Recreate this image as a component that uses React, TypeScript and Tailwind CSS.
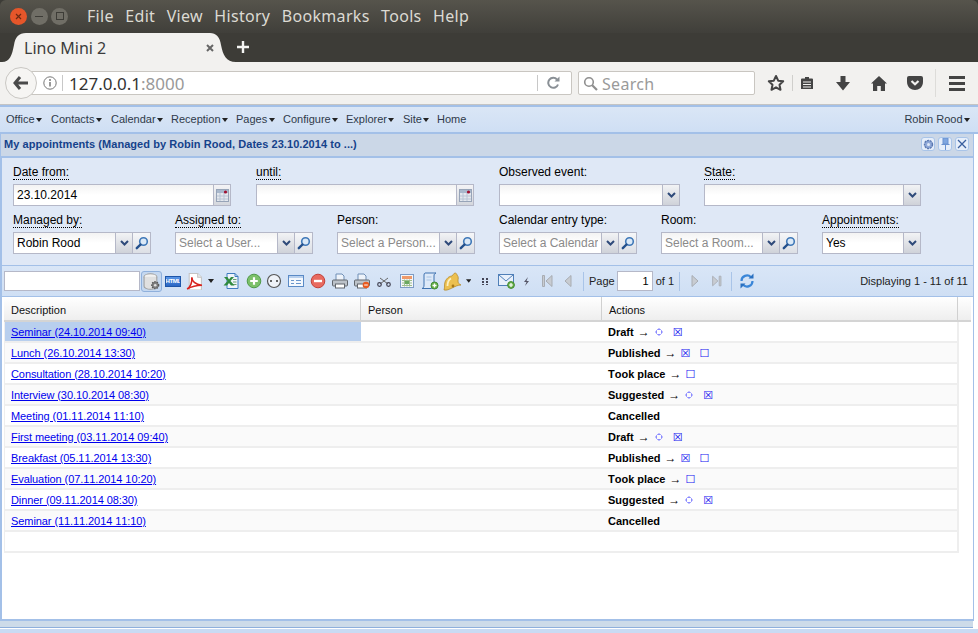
import React from "react";

const Caret = ({ c = "#222" }: { c?: string }) => (
  <svg width="6" height="4" viewBox="0 0 6 4" className="ml-[1.5px]"><path d="M0 0h6L3 4z" fill={c} /></svg>
);

const MenuItem = ({ t, w, caret = true }: { t: string; w: number; caret?: boolean }) => (
  <div className="flex items-center text-[#2f3a4a]" style={{ width: w }}>
    <span>{t}</span>
    {caret && <Caret />}
  </div>
);

const CalBtn = () => (
  <div className="w-[17px] h-full shrink-0 flex items-center justify-center bg-gradient-to-b from-[#f4f4f6] to-[#d4d7dd] border-l border-[#b5b8c8]">
    <svg width="13" height="13" viewBox="0 0 13 13">
      <rect x="0.5" y="0.5" width="12" height="12" fill="#e4e8ee" stroke="#97a4b8" />
      <rect x="1" y="1" width="11" height="3" fill="#a9b8cc" />
      <path d="M4 4v8M8 4v8M1 7h11M1 10h11" stroke="#b8c4d4" />
      <circle cx="9.5" cy="3" r="1.6" fill="#a01030" />
    </svg>
  </div>
);

const DropBtn = () => (
  <div className="w-[17px] h-full shrink-0 flex items-center justify-center bg-gradient-to-b from-[#f2f3f5] to-[#cfd2d9] border-l border-[#b5b8c8]">
    <svg width="9" height="6" viewBox="0 0 9 6"><path d="M1 1l3.5 3.5L8 1" fill="none" stroke="#2f4a7a" strokeWidth="2" /></svg>
  </div>
);

const SearchBtn = () => (
  <div className="w-[18px] h-full shrink-0 flex items-center justify-center bg-gradient-to-b from-[#f6f7f9] to-[#dcdfe5] border-l border-[#b5b8c8]">
    <svg width="14" height="14" viewBox="0 0 14 14">
      <circle cx="8.5" cy="5.5" r="3.8" fill="#dbe9f7" stroke="#3f78b8" strokeWidth="1.6" />
      <path d="M5.5 8.5L1.8 12.2" stroke="#24508c" strokeWidth="2.4" strokeLinecap="round" />
    </svg>
  </div>
);

const Field = ({
  label, w, value, placeholder, dotted, btn, search, mr, clip,
}: {
  label: string; w: number; value?: string; placeholder?: string; dotted?: boolean;
  btn: "cal" | "drop"; search?: boolean; mr: number; clip?: boolean;
}) => (
  <div className="shrink-0" style={{ width: w, marginRight: mr }}>
    <div className="h-[19px] leading-[15px] text-[12px] text-black">
      <span className={dotted ? "border-b border-dotted border-black inline-block h-[15px]" : ""}>{label}</span>
    </div>
    <div className="h-[22px] flex border border-[#b5b8c8] bg-gradient-to-b from-[#f3f3f3] via-white to-white overflow-hidden">
      <div className={`flex-1 min-w-0 pl-[3px] text-[12px] leading-[20px] whitespace-nowrap overflow-hidden ${clip ? "mr-[3px]" : "mr-[2px]"}`}>
        {value ? <span className="text-black">{value}</span> : <span className="text-[#8a8a8a]">{placeholder}</span>}
      </div>
      {btn === "cal" ? <CalBtn /> : <DropBtn />}
      {search && <SearchBtn />}
    </div>
  </div>
);

/* ---- toolbar icons ---- */
const I = ({ w, children }: { w: number; children: React.ReactNode }) => (
  <div className="shrink-0 flex items-center justify-center h-full" style={{ width: w }}>{children}</div>
);
const S = ({ s = 16, children }: { s?: number; children: React.ReactNode }) => (
  <svg width={s} height={s} viewBox="0 0 16 16">{children}</svg>
);
const Sep = () => <div className="w-px h-[19px] bg-[#a9c4e8] shrink-0" />;

const DbGear = () => (
  <div className="w-[21px] h-[21px] shrink-0 rounded-[3px] border border-[#8fb0dc] bg-[#c5d8f0] flex items-center justify-center">
    <S s={17}>
      <ellipse cx="7" cy="3.500" rx="6" ry="2.800" fill="#f2f2f2" stroke="#a0a0a0" />
      <path d="M1 3.500v9c0 1.500 2.700 2.800 6 2.800s6-1.300 6-2.800v-9" fill="#e0e0e0" stroke="#a0a0a0" />
      <circle cx="11.500" cy="11.500" r="3.200" fill="#808080" stroke="#5a5a5a" strokeWidth="1.400" strokeDasharray="1.300 1" />
      <circle cx="11.500" cy="11.500" r="1.200" fill="#e0e0e0" />
    </S>
  </div>
);
const Html = () => (
  <div className="w-[16px] h-[11px] border border-[#1e55a8] bg-gradient-to-b from-[#5a96e6] to-[#2a66c4] flex items-center justify-center overflow-hidden">
    <span className="text-[6px] leading-[9px] font-bold tracking-[-0.4px] text-white">HTML</span>
  </div>
);
const Pdf = () => (
  <S s={17}>
    <path d="M3 0.500h8l3.500 3.500v12H3z" fill="#fff" stroke="#c4c4c4" />
    <path d="M11 0.500V4h3.500" fill="#eee" stroke="#c4c4c4" />
    <path d="M1 15c3-1.500 5-6 4.500-11 0 3.500 3 7 9.500 7.500-5 0-9.500 1-14 3.500z" fill="none" stroke="#d8221e" strokeWidth="1.500" />
  </S>
);
const Excel = () => (
  <S>
    <path d="M4 0.5h8l3 3v12H4z" fill="#eef4fa" stroke="#3f7cc0" />
    <path d="M12 0.500v3h3" fill="none" stroke="#3f7cc0" />
    <path d="M10 6.500h3.500M10 9h3.500M10 11.500h3.500" stroke="#6aa070" />
    <path d="M1 4h3.500L6 6.500 8 4h3L7.500 8l4 4.500H8L6 10l-2 2.500H0.500L4.500 8z" fill="#2f8a3e" />
  </S>
);
const Plus = () => (
  <S>
    <circle cx="8" cy="8" r="6.8" fill="#7cc06a" stroke="#4f9a48" />
    <path d="M8 4.2v7.6M4.2 8h7.6" stroke="#fff" strokeWidth="2.2" />
  </S>
);
const Dots = () => (
  <S>
    <circle cx="8" cy="8" r="6.5" fill="#eef2f8" stroke="#555" strokeWidth="1.2" />
    <circle cx="5" cy="8" r="1" fill="#333" />
    <circle cx="11" cy="8" r="1" fill="#333" />
  </S>
);
const FormI = () => (
  <S>
    <rect x="0.5" y="2.5" width="15" height="11" fill="#f4f8fd" stroke="#5a8ac6" />
    <rect x="1" y="3" width="14" height="2" fill="#b8d0ee" />
    <path d="M3 7.5h3M3 10.5h3M8 7.5h5M8 10.5h5" stroke="#6a96cc" />
  </S>
);
const Minus = () => (
  <S>
    <circle cx="8" cy="8" r="6.8" fill="#e86a60" stroke="#c24038" />
    <path d="M4 8h8" stroke="#fff" strokeWidth="2.4" />
  </S>
);
const Printer = ({ badge }: { badge?: boolean }) => (
  <S>
    <path d="M4 1h6l2 2v5H4z" fill="#eef3fa" stroke="#6f8fb6" />
    <rect x="0.5" y="7" width="15" height="6" rx="1" fill="#bcc2c9" stroke="#62676e" />
    <rect x="3.5" y="11" width="9" height="4" fill="#fff" stroke="#62676e" />
    {badge && <circle cx="12" cy="12" r="3.3" fill="#e85a20" />}
    {badge && <path d="M10.2 12h3.6" stroke="#fff" />}
  </S>
);
const Scissors = () => (
  <S>
    <path d="M4 5l8 6M12 5l-8 6" stroke="#666" strokeWidth="1" />
    <circle cx="3.5" cy="11.5" r="1.8" fill="none" stroke="#445" strokeWidth="1.2" />
    <circle cx="12.5" cy="11.5" r="1.8" fill="none" stroke="#445" strokeWidth="1.2" />
  </S>
);
const Cal = () => (
  <S>
    <rect x="1.5" y="1.5" width="13" height="13" fill="#f4f6fa" stroke="#7d9cc4" />
    <rect x="3" y="3" width="10" height="3" fill="#ee9a6a" />
    <path d="M3 7.500h10M3 10h10M3 12.500h10M5.500 6.500v7M8 6.500v7M10.500 6.500v7" stroke="#9dbf8c" />
    <rect x="6" y="8" width="4" height="3" fill="#6aa860" />
  </S>
);
const Script = () => (
  <svg width="19" height="18" viewBox="0 0 19 18">
    <path d="M5 1h11c-1.500 .5-2 1.500-2 3v9c0 2-1 3.500-2.500 3.500H2C3.500 16 4 15 4 13V3c0-1 .300-1.700 1-2z" fill="#dde9f8" stroke="#3f72b0" />
    <path d="M6.500 5h5M6.500 8h5" stroke="#a8c4e4" />
    <circle cx="14.500" cy="13.500" r="3.500" fill="#6ab04c" stroke="#3f8a30" />
    <path d="M12.500 13.500h4M14.500 11.500v4" stroke="#fff" strokeWidth="1.300" />
  </svg>
);
const Bell = () => (
  <svg width="20" height="19" viewBox="0 0 20 19">
    <path d="M13 1c1 0 2 1 2 2 2 2 1 4 1 6s1 3 3 4c-3 0-6 1.500-9 3s-5 2.500-8 2c1-3 0-5 1-8s4-6 7-6c1-1 2-3 3-3z" fill="#ecc050" stroke="#b08420" strokeWidth="0.700" />
    <path d="M9 6.500C7 7.500 5.500 10 5.500 14" stroke="#fcf0c0" strokeWidth="1.800" fill="none" />
    <circle cx="11" cy="14" r="1.400" fill="#a87818" />
  </svg>
);
const GridI = () => (
  <svg width="7" height="7" viewBox="0 0 7 7"><path d="M0 0h2v2H0zM4 0h2v2H4zM0 3h2v2H0zM4 3h2v2H4zM0 6h2v1H0zM4 6h2v1H4z" fill="#445" /></svg>
);
const Mail = () => (
  <svg width="17" height="16" viewBox="0 0 17 16">
    <rect x="0.500" y="1.500" width="15" height="11" fill="#e8f0fb" stroke="#4f7fb8" />
    <path d="M1 2l7 6 7-6" fill="none" stroke="#4f7fb8" />
    <circle cx="13" cy="12" r="3.400" fill="#6ab04c" stroke="#3f8a30" />
    <path d="M11 12h4M13 10v4" stroke="#fff" strokeWidth="1.200" />
  </svg>
);
const Bolt = () => (
  <svg width="7" height="9" viewBox="0 0 7 9"><path d="M5 0L1 5h2.500L2 9l4-5H3.500z" fill="#556" /></svg>
);
const Nav = ({ d }: { d: "first" | "prev" | "next" | "last" }) => (
  <S>
    {d === "first" && <path d="M3.500 2.500h2v11h-2zM13 2.500v11L7 8z" fill="#c8ccd2" stroke="#a8acb2" />}
    {d === "prev" && <path d="M11 2.500v11L5 8z" fill="#c8ccd2" stroke="#a8acb2" />}
    {d === "next" && <path d="M5 2.500v11L11 8z" fill="#c8ccd2" stroke="#a8acb2" />}
    {d === "last" && <path d="M12.500 2.500h-2v11h2zM3 2.500v11L9 8z" fill="#c8ccd2" stroke="#a8acb2" />}
  </S>
);
const Refresh = () => (
  <S>
    <path d="M2.500 8A5.500 5.500 0 0 1 12 4.200" fill="none" stroke="#3a86d8" strokeWidth="2.200" />
    <path d="M13.500 8A5.500 5.500 0 0 1 4 11.800" fill="none" stroke="#3a86d8" strokeWidth="2.200" />
    <path d="M9.500 5.500h5v-5zM6.500 10.500h-5v5z" fill="#2a70c0" />
  </S>
);
const Sun = () => (
  <svg width="8" height="8" viewBox="0 0 8 8" className="ml-[5px] mr-[1px]">
    <path d="M2.500 1.500h3l1 1v3l-1 1h-3l-1-1v-3z" fill="none" stroke="#8a8aff" />
    <path d="M4 0v1M4 7v1M0 4h1M7 4h1" stroke="#8a8aff" />
  </svg>
);

/* ---- grid ---- */
type Row = { t: string; a: string; g: string[] };
const rows: Row[] = [
  { t: "Seminar (24.10.2014 09:40)", a: "Draft", g: ["☼", "☒"] },
  { t: "Lunch (26.10.2014 13:30)", a: "Published", g: ["☒", "☐"] },
  { t: "Consultation (28.10.2014 10:20)", a: "Took place", g: ["☐"] },
  { t: "Interview (30.10.2014 08:30)", a: "Suggested", g: ["☼", "☒"] },
  { t: "Meeting (01.11.2014 11:10)", a: "Cancelled", g: [] },
  { t: "First meeting (03.11.2014 09:40)", a: "Draft", g: ["☼", "☒"] },
  { t: "Breakfast (05.11.2014 13:30)", a: "Published", g: ["☒", "☐"] },
  { t: "Evaluation (07.11.2014 10:20)", a: "Took place", g: ["☐"] },
  { t: "Dinner (09.11.2014 08:30)", a: "Suggested", g: ["☼", "☒"] },
  { t: "Seminar (11.11.2014 11:10)", a: "Cancelled", g: [] },
];

const Head = ({ t, w }: { t: string; w: number }) => (
  <div className="h-full border-r border-[#d0d0d0] pl-[7px] leading-[26px] text-[11px] text-[#111]" style={{ width: w }}>{t}</div>
);

export default function App() {
  return (
    <div className="w-[978px] h-[633px] overflow-hidden flex flex-col bg-white font-['Liberation_Sans',sans-serif]">
      {/* window title + menu */}
      <div className="h-[33px] shrink-0 bg-[#3d3c37]">
        <div className="h-full pb-[1px] rounded-t-[6px] bg-gradient-to-b from-[#56544c] to-[#403f3a] flex items-center font-['Noto_Sans',sans-serif]">
          <div className="w-[87px] flex items-center pl-[10px] gap-[3.5px]">
            <div className="w-[17px] h-[17px] rounded-full bg-[#e5562a] flex items-center justify-center">
              <svg width="7" height="7" viewBox="0 0 7 7"><path d="M1 1l5 5M6 1l-5 5" stroke="#6d2a12" strokeWidth="1.200" /></svg>
            </div>
            <div className="w-[17px] h-[17px] rounded-full bg-[#706e66] flex items-center justify-center"><div className="w-[8px] h-px bg-[#3d3c37]" /></div>
            <div className="w-[17px] h-[17px] rounded-full bg-[#706e66] flex items-center justify-center"><div className="w-[8px] h-[8px] border border-[#3d3c37]" /></div>
          </div>
          <div className="flex gap-[11.5px] text-[16px] tracking-[0.3px] text-[#dcdad3]">
            {["File", "Edit", "View", "History", "Bookmarks", "Tools", "Help"].map((m) => <span key={m}>{m}</span>)}
          </div>
        </div>
      </div>

      {/* tab strip */}
      <div className="h-[29px] shrink-0 bg-[#3d3c37] flex items-end pl-[2px] font-['Noto_Sans',sans-serif]">
        <div className="relative w-[234px] h-[29px] flex items-center pl-[22px]">
          <svg className="absolute inset-0" width="234" height="29" viewBox="0 0 234 29">
            <path d="M0 29C8 29 10 22 12 12 13 4 17 0 24 0H208C214 0 218 4 219 12 221 22 224 29 234 29z" fill="#f2f1ef" />
          </svg>
          <span className="relative text-[16px] text-[#3c3c3c]">Lino Mini 2</span>
          <svg className="absolute left-[204px] top-[11px]" width="8" height="8" viewBox="0 0 8 8"><path d="M1 1l6 6M7 1l-6 6" stroke="#666" strokeWidth="2" /></svg>
        </div>
        <svg className="mb-[8px]" width="14" height="14" viewBox="0 0 14 14"><path d="M7 1v12M1 7h12" stroke="#f4f4f2" strokeWidth="2.400" /></svg>
      </div>

      {/* nav bar */}
      <div className="h-[43px] shrink-0 bg-[#f2f1ef] border-b border-[#c4c4c4] flex items-center relative font-['Noto_Sans',sans-serif]">
        <div className="absolute left-[5px] top-[5px] w-[32px] h-[32px] rounded-full border border-[#c9c7c3] bg-[#f6f5f3] flex items-center justify-center z-10">
          <svg width="16" height="14" viewBox="0 0 16 14"><path d="M7 1L2 7l5 6M2 7h13" fill="none" stroke="#4a4a4a" strokeWidth="3" /></svg>
        </div>
        <div className="ml-[30px] w-[542px] h-[24px] rounded-[2px] border border-[#c9c6c1] bg-white flex items-center">
          <svg className="ml-[12px]" width="14" height="14" viewBox="0 0 14 14">
            <circle cx="7" cy="7" r="6.200" fill="none" stroke="#777" strokeWidth="1" />
            <path d="M7 6v4.500" stroke="#777" strokeWidth="1.500" /><circle cx="7" cy="4" r="1" fill="#777" />
          </svg>
          <div className="ml-[5px] w-px h-[16px] bg-[#c8c8c8]" />
          <span className="ml-[6px] pt-[1px] text-[17px] text-[#333]">127.0.0.1<span className="text-[#999]">:8000</span></span>
          <div className="ml-auto w-px h-[16px] bg-[#c8c8c8]" />
          <svg className="ml-[9px] mr-[10px]" width="14" height="14" viewBox="0 0 14 14">
            <path d="M11 8.500A5 5 0 1 1 10 3.500" fill="none" stroke="#8a9096" strokeWidth="2" />
            <path d="M7.500 5.500h5v-5z" fill="#8a9096" />
          </svg>
        </div>
        <div className="ml-[6px] w-[177px] h-[24px] rounded-[2px] border border-[#c9c6c1] bg-white flex items-center">
          <svg className="ml-[4px]" width="15" height="15" viewBox="0 0 15 15">
            <circle cx="6" cy="6" r="4.300" fill="none" stroke="#8f8f8f" strokeWidth="1.600" />
            <path d="M9.200 9.200L14 14" stroke="#8f8f8f" strokeWidth="2.200" />
          </svg>
          <span className="ml-[4px] pt-[1px] text-[16px] tracking-[0.3px] text-[#9a9a9a]">Search</span>
        </div>
        <svg className="ml-[12px]" width="18" height="18" viewBox="0 0 18 18"><path d="M9 2l2.200 4.700 5 .6-3.700 3.500 1 5L9 13.300 4.500 15.800l1-5L1.800 7.300l5-.6z" fill="none" stroke="#444" strokeWidth="2" strokeLinejoin="round" /></svg>
        <div className="ml-[7px] w-px h-[16px] bg-[#d0cfcc]" />
        <svg className="ml-[7px]" width="14" height="14" viewBox="0 0 14 14"><path d="M1 3.500a1 1 0 0 1 1-1h3V1h4v1.500h3a1 1 0 0 1 1 1V13H1z" fill="#444" /><path d="M3 6h8M3 8.500h8M3 11h8" stroke="#f2f1ef" /></svg>
        <svg className="ml-[22px]" width="14" height="15" viewBox="0 0 14 15"><path d="M4.500 0h5v6H14l-7 8.500L0 6h4.500z" fill="#444" /></svg>
        <svg className="ml-[21px]" width="16" height="15" viewBox="0 0 16 15"><path d="M8 0l8 7.500h-2V15H9.800v-5H6.200v5H2V7.500H0z" fill="#444" /></svg>
        <svg className="ml-[20px]" width="16" height="14" viewBox="0 0 16 14"><path d="M2 0h12a2 2 0 0 1 2 2v4c0 5-4 8-8 8S0 11 0 6V2a2 2 0 0 1 2-2z" fill="#444" /><path d="M4.500 5L8 8.300 11.500 5" fill="none" stroke="#f2f1ef" strokeWidth="2.200" /></svg>
        <div className="ml-[12px] w-px h-[28px] bg-[#dddcd9]" />
        <div className="ml-[13px] flex flex-col gap-[3px]">
          <div className="w-[16px] h-[3px] bg-[#444]" /><div className="w-[16px] h-[3px] bg-[#444]" /><div className="w-[16px] h-[3px] bg-[#444]" />
        </div>
      </div>

      {/* Lino main menu */}
      <div className="h-[29px] shrink-0 border-y-2 border-[#a3c0e8] bg-gradient-to-b from-[#dae6f6] to-[#cfdff4] flex items-center pl-[6px] pr-[8px] text-[11px]">
        <MenuItem t="Office" w={45} />
        <MenuItem t="Contacts" w={60} />
        <MenuItem t="Calendar" w={60} />
        <MenuItem t="Reception" w={65} />
        <MenuItem t="Pages" w={47} />
        <MenuItem t="Configure" w={63} />
        <MenuItem t="Explorer" w={57} />
        <MenuItem t="Site" w={34} />
        <MenuItem t="Home" w={40} caret={false} />
        <div className="ml-auto flex items-center text-[#2f3a4a]"><span>Robin Rood</span><Caret /></div>
      </div>

      {/* window panel */}
      <div className="flex-1 min-h-0 flex flex-col w-[974px] border-r border-[#a3c0e8]">
        <div className="h-[24px] shrink-0 pb-[2px] bg-[#cbd7e7] border-b-2 border-[#a3c0e8] border-l border-l-[#a3c0e8] flex items-center pl-[3px] pr-[4px] text-[11px] font-bold tracking-[0.05px] text-[#15428b]">
          <span>My appointments (Managed by Robin Rood, Dates 23.10.2014 to ...)</span>
          <div className="ml-auto flex gap-[3px]">
            {[
              <svg key="g" width="11" height="11" viewBox="0 0 11 11"><circle cx="5.500" cy="5.500" r="4" fill="#8fa8d8" stroke="#5a78b0" strokeWidth="1.400" strokeDasharray="2 0.800" /><circle cx="5.500" cy="5.500" r="1.500" fill="#dfe8f6" /></svg>,
              <svg key="p" width="11" height="12" viewBox="0 0 11 12"><path d="M3 0h5v6H3zM1.500 6.500h8M5.500 7v5" fill="#7fa6e0" stroke="#6a92d0" /></svg>,
              <svg key="x" width="10" height="10" viewBox="0 0 10 10"><path d="M1 1l8 8M9 1l-8 8" stroke="#3a5f9e" strokeWidth="1.300" /></svg>,
            ].map((ic, i) => (
              <div key={i} className="w-[14px] h-[14px] rounded-[3px] border border-[#a9c4e8] bg-[#e6eefa] flex items-center justify-center">{ic}</div>
            ))}
          </div>
        </div>

        {/* filter form */}
        <div className="h-[108px] shrink-0 bg-[#dfe8f6] border-l-2 border-[#a3c0e8] border-b border-b-[#a3c0e8] pl-[11px] pt-[7px]">
          <div className="flex h-[48px]">
            <Field label="Date from:" w={218} mr={25} value="23.10.2014" btn="cal" dotted />
            <Field label="until:" w={218} mr={25} btn="cal" dotted />
            <Field label="Observed event:" w={181} mr={24} btn="drop" />
            <Field label="State:" w={217} mr={0} btn="drop" dotted />
          </div>
          <div className="flex">
            <Field label="Managed by:" w={138} mr={24} value="Robin Rood" btn="drop" search dotted />
            <Field label="Assigned to:" w={138} mr={24} placeholder="Select a User..." btn="drop" search dotted />
            <Field label="Person:" w={138} mr={24} placeholder="Select a Person..." btn="drop" search />
            <Field label="Calendar entry type:" w={138} mr={24} placeholder="Select a Calendar" btn="drop" search clip />
            <Field label="Room:" w={137} mr={24} placeholder="Select a Room..." btn="drop" search />
            <Field label="Appointments:" w={99} mr={0} value="Yes" btn="drop" dotted />
          </div>
        </div>

        {/* grid panel */}
        <div className="flex-1 min-h-0 flex flex-col border-l-2 border-[#a3c0e8] border-b-2 border-b-[#a3c0e8] bg-white">
          {/* toolbar */}
          <div className="h-[31px] shrink-0 border-b border-[#a3c0e8] bg-gradient-to-b from-[#d9e6f7] to-[#cfdff4] flex items-center pl-[2px] text-[11px] text-[#222]">
            <div className="w-[136px] h-[20px] border border-[#b5b8c8] bg-white shrink-0 mr-[1px]" />
            <DbGear />
            <I w={22}><Html /></I>
            <I w={21}><Pdf /></I>
            <I w={11}><Caret /></I>
            <I w={29}><Excel /></I>
            <I w={18}><Plus /></I>
            <I w={22}><Dots /></I>
            <I w={22}><FormI /></I>
            <I w={22}><Minus /></I>
            <I w={22}><Printer /></I>
            <I w={22}><Printer badge /></I>
            <I w={22}><Scissors /></I>
            <I w={24}><Cal /></I>
            <I w={21}><Script /></I>
            <I w={24}><Bell /></I>
            <I w={7}><Caret /></I>
            <div className="ml-[2px]"><I w={25}><GridI /></I></div>
            <I w={17}><Mail /></I>
            <I w={23}><Bolt /></I>
            <I w={17}><Nav d="first" /></I>
            <I w={25}><Nav d="prev" /></I>
            <div className="ml-[3px]"><Sep /></div>
            <span className="ml-[5px] text-[11px]">Page</span>
            <input readOnly value="1" className="ml-[2px] w-[36px] h-[20px] border border-[#b5b8c8] bg-white text-right pr-[3px] text-[11px] text-black outline-none" />
            <span className="ml-[3px]">of 1</span>
            <div className="ml-[5px]"><Sep /></div>
            <I w={30}><Nav d="next" /></I>
            <I w={14}><Nav d="last" /></I>
            <div className="ml-[7px]"><Sep /></div>
            <I w={30}><Refresh /></I>
            <span className="ml-auto mr-[5px] text-[11px]">Displaying 1 - 11 of 11</span>
          </div>

          {/* header */}
          <div className="h-[25px] shrink-0 ml-[2px] mr-[2px] flex border-b-2 border-[#d4d4d4] bg-gradient-to-b from-white to-[#eeeeee]">
            <Head t="Description" w={357} />
            <Head t="Person" w={241} />
            <Head t="Actions" w={356} />
          </div>

          {/* rows */}
          <div className="ml-[2px] w-[955px] [font-kerning:none]">
            {rows.map((r, i) => (
              <div key={i} className={`h-[21px] flex border-b-2 border-r-2 border-l border-[#eeeeee] text-[11px] leading-[21px] ${i % 2 ? "bg-[#fafafa]" : "bg-white"}`}>
                <div className={`w-[356px] shrink-0 pl-[6px] tracking-[-0.08px] ${i === 0 ? "bg-[#b8cfee]" : ""}`}>
                  <a href="#" className="text-[#0000ee] underline">{r.t}</a>
                </div>
                <div className="w-[241px] shrink-0" />
                <div className="pl-[6px] pt-[1px] flex items-center whitespace-nowrap text-black">
                  <b>{r.a}</b>
                  {r.a !== "Cancelled" && <b className="ml-[4px] text-[12px]">→</b>}
                  {r.g.map((g, k) =>
                    g === "☼" ? (
                      <Sun key={k} />
                    ) : (
                      <span key={k} className={`text-[#1010f0] text-[11px] font-bold font-['DejaVu_Sans',sans-serif] ${k === 0 ? "ml-[4px]" : "ml-[9px]"}`}>{g}</span>
                    )
                  )}
                </div>
              </div>
            ))}
            <div className="h-[21px] border-b-2 border-r-2 border-l border-[#eeeeee]" />
          </div>
        </div>
      </div>

      {/* bottom strips */}
      <div className="h-[7px] shrink-0 w-[973px] bg-[#cddbe9] border-b border-[#8fb0dc]" />
      <div className="h-[5px] shrink-0 border-t border-white bg-[#c9dbf4]" />
    </div>
  );
}
